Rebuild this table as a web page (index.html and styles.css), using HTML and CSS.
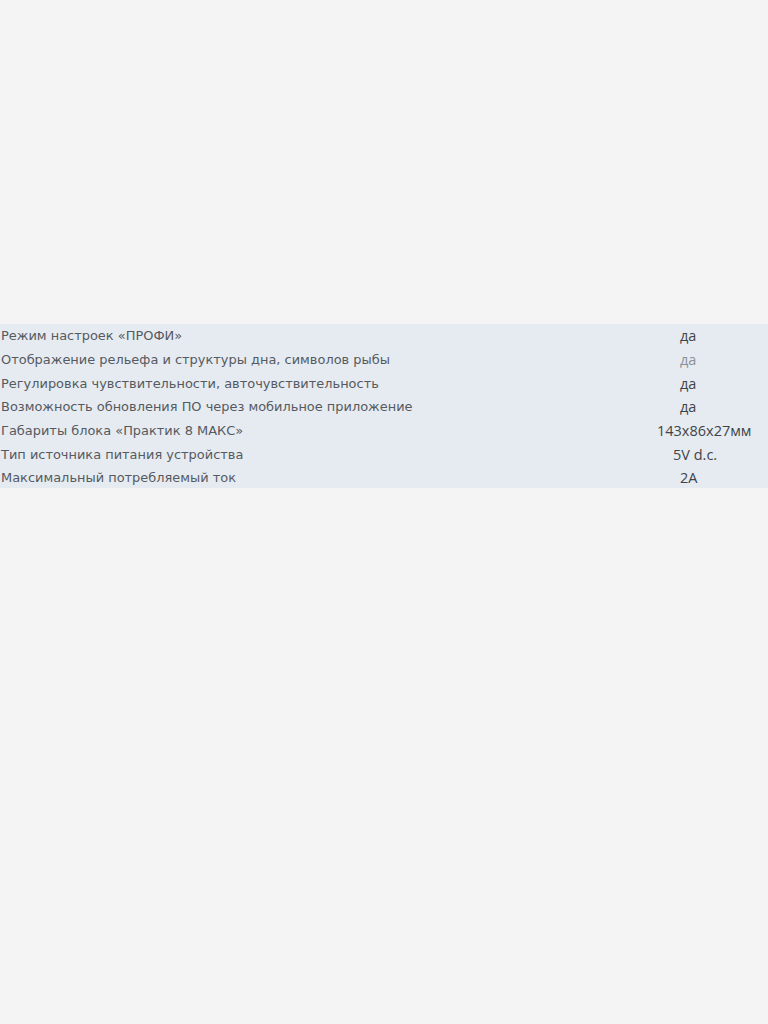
FILE: index.html
```html
<!DOCTYPE html>
<html lang="ru">
<head>
<meta charset="utf-8">
<title>Характеристики</title>
<link rel="stylesheet" href="styles.css">
</head>
<body>
<div class="page">
  <div class="specs">
    <div class="row"><div class="label">Режим настроек «ПРОФИ»</div><div class="value">да</div></div>
    <div class="row"><div class="label">Отображение рельефа и структуры дна, символов рыбы</div><div class="value light">да</div></div>
    <div class="row"><div class="label">Регулировка чувствительности, авточувствительность</div><div class="value">да</div></div>
    <div class="row"><div class="label">Возможность обновления ПО через мобильное приложение</div><div class="value">да</div></div>
    <div class="row"><div class="label">Габариты блока «Практик 8 МАКС»</div><div class="value wide">143x86x27мм</div></div>
    <div class="row"><div class="label">Тип источника питания устройства</div><div class="value mid">5V d.c.</div></div>
    <div class="row"><div class="label">Максимальный потребляемый ток</div><div class="value">2A</div></div>
  </div>
</div>
</body>
</html>
```
FILE: styles.css
```css
html, body {
  margin: 0;
  padding: 0;
  background: #f4f4f4;
}
.page {
  width: 768px;
  height: 1024px;
  padding-top: 324px;
  box-sizing: border-box;
}
.specs {
  width: 768px;
  height: 164px;
  background: #e6ebf2;
  display: flex;
  flex-direction: column;
}
.row {
  display: grid;
  grid-template-columns: 608px 160px;
  height: 23.67px;
  flex: none;
  align-items: center;
}
.label {
  font-family: "DejaVu Sans", sans-serif;
  font-size: 12.95px;
  color: #555a60;
  white-space: nowrap;
  padding-left: 1px;
}
.value {
  font-family: "Open Sans", sans-serif;
  font-size: 14.5px;
  color: #3f4448;
  white-space: nowrap;
  padding-left: 72px;
}
.value.light { color: #8c9096; }
.value.wide { padding-left: 49px; }
.value.mid { padding-left: 65px; }
```
